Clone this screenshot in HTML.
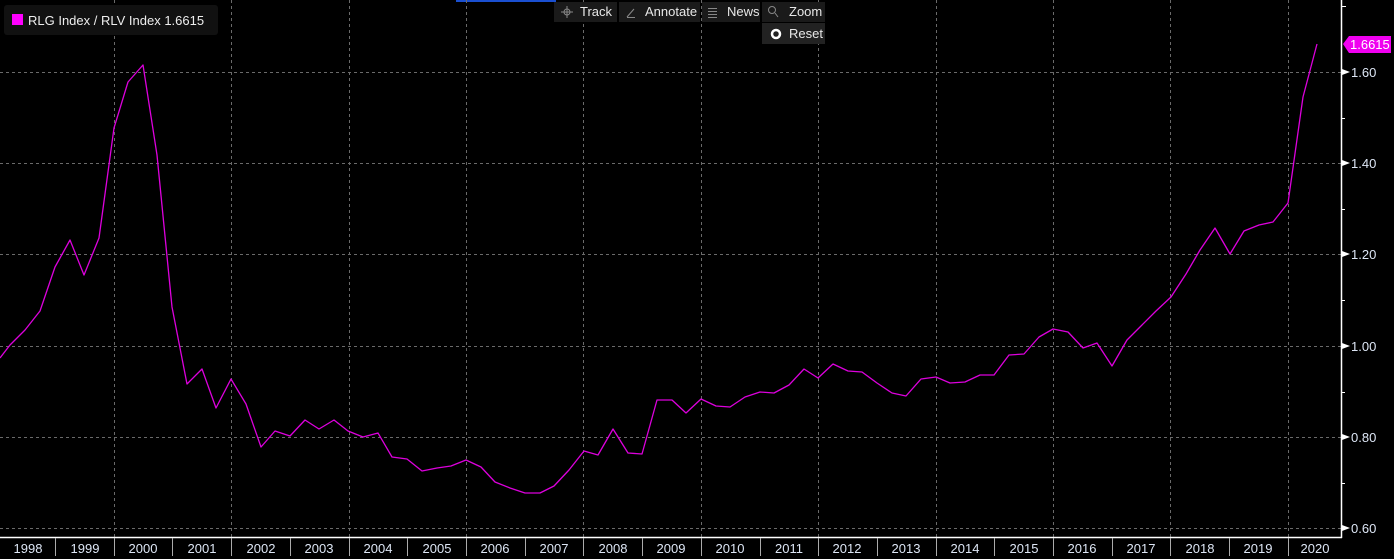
<!DOCTYPE html>
<html><head><style>
html,body{margin:0;padding:0;background:#000;width:1394px;height:559px;overflow:hidden;font-family:"Liberation Sans",sans-serif;}
.t{fill:#dde6f5;font-size:13px;font-family:"Liberation Sans",sans-serif;}
.btn{fill:#1a1a1a;}
.bt{fill:#e8e8e8;font-size:13px;font-family:"Liberation Sans",sans-serif;}
</style></head><body>
<svg width="1394" height="559" xmlns="http://www.w3.org/2000/svg">
<rect width="1394" height="559" fill="#000"/>
<rect x="456" y="0" width="100" height="2" fill="#1a4fd0"/>
<g stroke="#6a6a6a" stroke-width="1" stroke-dasharray="3,3">
<line x1="0" y1="72.5" x2="1341" y2="72.5"/>
<line x1="0" y1="163.5" x2="1341" y2="163.5"/>
<line x1="0" y1="254.5" x2="1341" y2="254.5"/>
<line x1="0" y1="346.5" x2="1341" y2="346.5"/>
<line x1="0" y1="437.5" x2="1341" y2="437.5"/>
<line x1="0" y1="528.5" x2="1341" y2="528.5"/>
<line x1="114.5" y1="0" x2="114.5" y2="537"/>
<line x1="231.5" y1="0" x2="231.5" y2="537"/>
<line x1="349.5" y1="0" x2="349.5" y2="537"/>
<line x1="466.5" y1="0" x2="466.5" y2="537"/>
<line x1="583.5" y1="0" x2="583.5" y2="537"/>
<line x1="701.5" y1="0" x2="701.5" y2="537"/>
<line x1="818.5" y1="0" x2="818.5" y2="537"/>
<line x1="936.5" y1="0" x2="936.5" y2="537"/>
<line x1="1053.5" y1="0" x2="1053.5" y2="537"/>
<line x1="1170.5" y1="0" x2="1170.5" y2="537"/>
<line x1="1288.5" y1="0" x2="1288.5" y2="537"/>
</g>
<line x1="0" y1="537.5" x2="1342" y2="537.5" stroke="#fff" stroke-width="1.5"/>
<line x1="1341.5" y1="0" x2="1341.5" y2="538" stroke="#fff" stroke-width="1.5"/>
<g stroke="#fff"><line x1="1341" y1="6.5" x2="1346" y2="6.5"/><line x1="1341" y1="118.5" x2="1345" y2="118.5"/><line x1="1341" y1="209.5" x2="1345" y2="209.5"/><line x1="1341" y1="300.5" x2="1345" y2="300.5"/><line x1="1341" y1="392.5" x2="1345" y2="392.5"/><line x1="1341" y1="483.5" x2="1345" y2="483.5"/></g>
<g stroke="#aaa" stroke-width="1">
<line x1="55.5" y1="538" x2="55.5" y2="556"/><line x1="114.5" y1="538" x2="114.5" y2="556"/><line x1="172.5" y1="538" x2="172.5" y2="556"/><line x1="231.5" y1="538" x2="231.5" y2="556"/><line x1="290.5" y1="538" x2="290.5" y2="556"/><line x1="349.5" y1="538" x2="349.5" y2="556"/><line x1="407.5" y1="538" x2="407.5" y2="556"/><line x1="466.5" y1="538" x2="466.5" y2="556"/><line x1="525.5" y1="538" x2="525.5" y2="556"/><line x1="583.5" y1="538" x2="583.5" y2="556"/><line x1="642.5" y1="538" x2="642.5" y2="556"/><line x1="701.5" y1="538" x2="701.5" y2="556"/><line x1="760.5" y1="538" x2="760.5" y2="556"/><line x1="818.5" y1="538" x2="818.5" y2="556"/><line x1="877.5" y1="538" x2="877.5" y2="556"/><line x1="936.5" y1="538" x2="936.5" y2="556"/><line x1="994.5" y1="538" x2="994.5" y2="556"/><line x1="1053.5" y1="538" x2="1053.5" y2="556"/><line x1="1112.5" y1="538" x2="1112.5" y2="556"/><line x1="1170.5" y1="538" x2="1170.5" y2="556"/><line x1="1229.5" y1="538" x2="1229.5" y2="556"/><line x1="1288.5" y1="538" x2="1288.5" y2="556"/>
</g>
<g class="t" text-anchor="middle">
<text x="28" y="553">1998</text><text x="85" y="553">1999</text><text x="143" y="553">2000</text><text x="202" y="553">2001</text><text x="261" y="553">2002</text><text x="319" y="553">2003</text><text x="378" y="553">2004</text><text x="437" y="553">2005</text><text x="495" y="553">2006</text><text x="554" y="553">2007</text><text x="613" y="553">2008</text><text x="671" y="553">2009</text><text x="730" y="553">2010</text><text x="789" y="553">2011</text><text x="847" y="553">2012</text><text x="906" y="553">2013</text><text x="965" y="553">2014</text><text x="1024" y="553">2015</text><text x="1082" y="553">2016</text><text x="1141" y="553">2017</text><text x="1200" y="553">2018</text><text x="1258" y="553">2019</text><text x="1315" y="553">2020</text>
</g>
<g fill="#fff">
<polygon points="1350,72 1342,69 1342,75"/><polygon points="1350,163 1342,160 1342,166"/><polygon points="1350,254 1342,251 1342,257"/><polygon points="1350,346 1342,343 1342,349"/><polygon points="1350,437 1342,434 1342,440"/><polygon points="1350,528 1342,525 1342,531"/>
</g>
<g class="t">
<text x="1351" y="77">1.60</text><text x="1351" y="168">1.40</text><text x="1351" y="259">1.20</text><text x="1351" y="351">1.00</text><text x="1351" y="442">0.80</text><text x="1351" y="533">0.60</text>
</g>
<polygon points="1343,44 1349,36 1391,36 1391,53 1349,53" fill="#f000f0"/>
<text x="1350" y="49" fill="#fff" style="font-size:13px;font-family:'Liberation Sans',sans-serif">1.6615</text>
<polyline fill="none" stroke="#dd00dd" stroke-width="1.3" stroke-linejoin="round" points="0,358 10,345 25,330 40,311 55,267 70,240 84,275 99,238 114,128 128,82 143,65 157,155 172,307 187,384 202,369 216,408 231,379 246,404 261,447 275,431 290,436 305,420 319,429 334,420 348,431 363,437 378,433 392,457 407,459 422,471 437,468 451,466 466,460 481,467 495,482 510,488 525,493 540,493 554,486 569,470 584,451 598,455 613,429 628,453 642,454 657,400 672,400 686,413 701,399 716,406 730,407 745,397 760,392 774,393 789,385 804,369 818,378 833,364 848,371 862,372 877,383 892,393 906,396 921,379 936,377 950,383 965,382 980,375 994,375 1009,355 1024,354 1039,337 1053,329 1068,332 1083,348 1097,343 1112,366 1127,340 1142,325 1156,311 1171,297 1186,274 1200,250 1215,228 1230,254 1244,231 1259,225 1273,222 1288,203 1303,97 1317,44"/>
<rect x="4" y="5" width="214" height="30" rx="3" fill="#111"/>
<rect x="12" y="14" width="11" height="11" fill="#ff00ff"/>
<text x="28" y="25" fill="#eee" style="font-size:13px;font-family:'Liberation Sans',sans-serif">RLG Index / RLV Index 1.6615</text>
<rect x="554" y="2" width="63" height="20" class="btn"/>
<rect x="619" y="2" width="81" height="20" class="btn"/>
<rect x="702" y="2" width="58" height="20" class="btn"/>
<rect x="762" y="2" width="63" height="20" class="btn"/>
<rect x="762" y="23" width="63" height="21" fill="#222"/>
<g stroke="#888" fill="none" stroke-width="1">
<circle cx="567" cy="12" r="3"/><line x1="561" y1="12" x2="573" y2="12"/><line x1="567" y1="6" x2="567" y2="18"/>
<line x1="627" y1="17" x2="634" y2="9"/><line x1="627" y1="17.5" x2="635" y2="17.5"/>
<line x1="708" y1="8.5" x2="717" y2="8.5"/><line x1="708" y1="11.5" x2="717" y2="11.5"/><line x1="708" y1="14.5" x2="717" y2="14.5"/><line x1="708" y1="17.5" x2="717" y2="17.5"/>
<circle cx="772" cy="10" r="3.5"/><line x1="775" y1="13" x2="778" y2="17"/>
</g>
<circle cx="776" cy="34" r="4" fill="none" stroke="#fff" stroke-width="2.5"/>
<g class="bt">
<text x="580" y="16">Track</text><text x="645" y="16">Annotate</text><text x="727" y="16">News</text><text x="789" y="16">Zoom</text><text x="789" y="38">Reset</text>
</g>
</svg>
</body></html>
